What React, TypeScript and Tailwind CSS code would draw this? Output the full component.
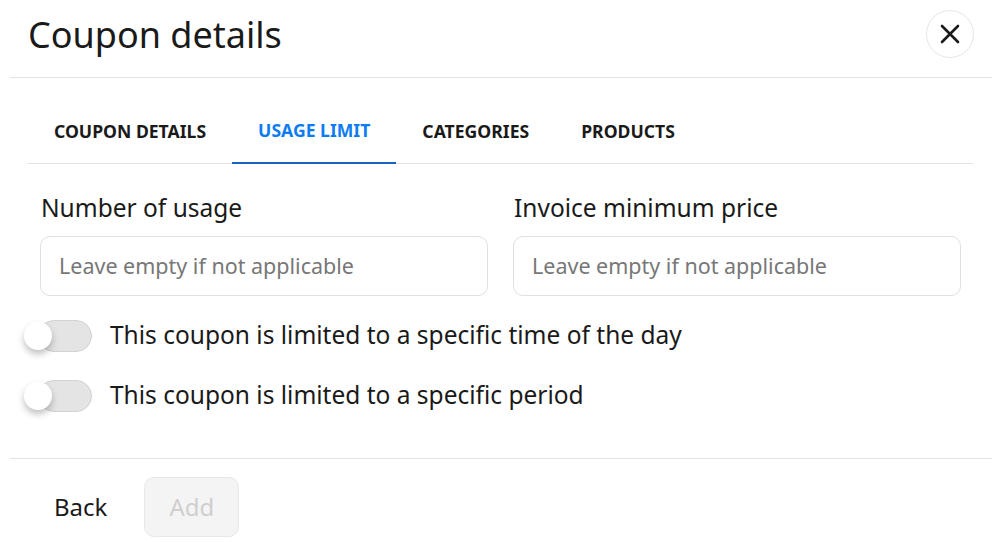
import React from "react";

function Toggle({ label }: { label: string }) {
  return (
    <div className="flex items-center h-[32px]">
      <div className="relative w-[68px] h-[32px] ml-[24px] shrink-0">
        <div className="absolute left-[14px] right-0 top-0 bottom-0 rounded-full bg-[#e4e4e4] border border-[#d2d2d2]" />
        <div className="absolute left-0 top-[2px] w-[28px] h-[28px] rounded-full bg-white shadow-[0_4px_7px_rgba(0,0,0,0.25)]" />
      </div>
      <span className="ml-[18px] text-[24.5px] leading-[32px] -mt-[3px] text-[#1a1a1a]">{label}</span>
    </div>
  );
}

export default function App() {
  const tabs = ["COUPON DETAILS", "USAGE LIMIT", "CATEGORIES", "PRODUCTS"];
  return (
    <div className="w-[1008px] h-[542px] bg-white overflow-hidden font-['Noto_Sans',sans-serif] text-[#1a1a1a]">
      <div className="ml-[10px] mr-[16px] h-[78px] border-b border-[#e3e3e3] flex items-center justify-between pl-[18px] pr-[18px]">
        <h1 className="text-[36px] leading-none text-[#1a1a1a] -mt-[8px]">Coupon details</h1>
        <button className="w-[48px] h-[48px] rounded-full border border-[#e6e6e6] flex items-center justify-center -mt-[10px]">
          <svg width="20" height="20" viewBox="0 0 20 20" fill="none" stroke="#1a1a1a" strokeWidth="2.6" strokeLinecap="round">
            <path d="M2 2 L18 18 M18 2 L2 18" />
          </svg>
        </button>
      </div>
      <div className="mx-[28px] w-[945px]">
        <div className="mt-[21px] flex h-[65px] border-b border-[#e3e3e3]">
          {tabs.map((t, i) => (
            <div
              key={t}
              className={
                i === 1
                  ? "h-[65px] px-[26px] flex items-center text-[17.6px] font-bold text-[#0d7cf2] border-b-2 border-[#1565c0] -mb-[1px]"
                  : "h-[65px] px-[26px] flex items-center text-[17.6px] font-bold text-[#1a1a1a]"
              }
            >
              {t}
            </div>
          ))}
        </div>
        <div className="px-[12px] pt-[30px]">
          <div className="grid grid-cols-2 gap-x-[25px]">
            <div className="flex flex-col">
              <label className="text-[24.5px] leading-[28px] pl-[1px]">Number of usage</label>
              <input
                className="mt-[14px] h-[60px] rounded-[10px] border border-[#e0e0e0] px-[18px] pb-[2px] text-[21.5px] placeholder:text-[#777] outline-none"
                placeholder="Leave empty if not applicable"
              />
            </div>
            <div className="flex flex-col">
              <label className="text-[24.5px] leading-[28px] pl-[1px]">Invoice minimum price</label>
              <input
                className="mt-[14px] h-[60px] rounded-[10px] border border-[#e0e0e0] px-[18px] pb-[2px] text-[21.5px] placeholder:text-[#777] outline-none"
                placeholder="Leave empty if not applicable"
              />
            </div>
          </div>
        </div>
        <div className="mt-[24px] -ml-[28px] flex flex-col gap-[28px]">
          <Toggle label="This coupon is limited to a specific time of the day" />
          <Toggle label="This coupon is limited to a specific period" />
        </div>
      </div>
      <div className="ml-[10px] mr-[16px] mt-[46px] border-t border-[#e3e3e3] pt-[18px] pl-[18px] flex items-center gap-[11px]">
        <button className="h-[60px] px-[26px] text-[24px] text-[#1a1a1a]">Back</button>
        <button className="h-[60px] w-[95px] rounded-[10px] bg-[#f4f4f4] border border-[#e8e8e8] text-[24px] text-[#cfcfcf]">Add</button>
      </div>
    </div>
  );
}
